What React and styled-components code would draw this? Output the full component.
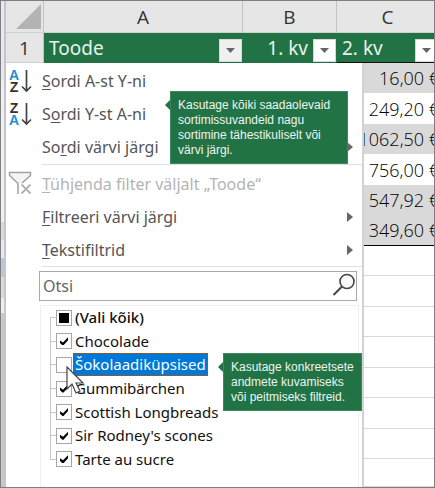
import React from 'react';
import styled, { createGlobalStyle } from 'styled-components';

const GlobalStyle = createGlobalStyle`
  * {
    box-sizing: border-box;
  }
  body {
    margin: 0;
    font-family: 'Noto Sans', 'Open Sans', sans-serif;
  }
`;

const Window = styled.div`
  display: flex;
  height: 100vh;
  min-height: 480px;
  border: 1px solid #7f7f7f;
  overflow: hidden;
  background: #fff;
`;

const Edge = styled.div`
  flex: 0 0 5px;
  border-right: 2px solid #c4c4cc;
  background: linear-gradient(
    #e8e8f4 0 79px,
    #efeff5 79px 221px,
    #dedad8 221px 239px,
    #e4eaf8 239px 257px,
    #bcc6da 257px 276px,
    #dedad8 276px 297px,
    #f0eeee 297px 312px,
    #cbc8c8 312px
  );
`;

const Sheet = styled.main`
  position: relative;
  flex: 1;
  min-width: 0;
  overflow: hidden;
`;

const Grid = styled.table`
  width: calc(100% + 5px);
  height: 100%;
  table-layout: fixed;
  border-collapse: separate;
  border-spacing: 0;

  th,
  td {
    padding: 0;
    font-weight: 400;
    white-space: nowrap;
  }
`;

const Col = styled.col`
  width: ${({ $width }) => $width || 'auto'};
`;

const ColumnHead = styled.th`
  height: 32px;
  border-right: 1px solid #c3c3c3;
  border-bottom: 1px solid #d0d0d0;
  background: #e6e6e6;
  color: #333;
  font-family: 'Open Sans', sans-serif;
  font-size: 19px;
  line-height: 24px;

  svg {
    display: block;
    margin-left: auto;
  }
`;

const RowHead = styled(ColumnHead)`
  height: 30px;
`;

const FieldHead = styled.th`
  height: 30px;
  border-bottom: 1px solid ${({ $ruled }) => ($ruled ? '#111' : '#217346')};
  background: #217346;
  color: #e9f3ec;
`;

const Field = styled.div`
  display: flex;
  align-items: center;
  justify-content: ${({ $end }) => ($end ? 'flex-end' : 'space-between')};
  gap: 5px;
  height: 29px;
  padding: 0 1px 0 5px;
  font-size: 19px;
  line-height: 24px;
`;

const FilterButton = styled.button`
  display: flex;
  align-items: center;
  justify-content: center;
  align-self: flex-end;
  width: 23px;
  height: 23px;
  padding: 0;
  border: 1px solid #d8d8d8;
  background: ${({ $open }) => ($open ? '#f0f0f0' : '#fff')};
`;

const Row = styled.tr`
  height: 31px;
  background: ${({ $shaded }) => ($shaded ? '#d9d9d9' : '#fff')};

  &:nth-child(odd) {
    height: 30px;
  }
  &:last-child {
    height: auto;
  }
`;

const Cell = styled.td`
  border-bottom: ${({ $rule }) => $rule};
`;

const Amount = styled(Cell)`
  color: #000;
  font-family: 'Open Sans', sans-serif;
  font-size: 18px;
  line-height: 24px;
  text-align: right;

  && {
    font-weight: 300;
  }
`;

const Menu = styled.section`
  position: absolute;
  top: 62px;
  right: 70px;
  bottom: 0;
  left: 0;
  display: flex;
  flex-direction: column;
  border-right: 2px solid #d2d2d2;
  background: #fff;
`;

const MenuItem = styled.button`
  display: grid;
  grid-template-columns: 36px 1fr 10px;
  align-items: center;
  width: 100%;
  height: 33px;
  padding: 0 5px 0 0;
  border: 0;
  background: none;
  color: ${({ disabled }) => (disabled ? '#b4b4b4' : '#555')};
  font: 16px/20px 'Noto Sans', 'Open Sans', sans-serif;
  text-align: left;
  white-space: nowrap;

  svg {
    display: block;
  }
  u {
    text-underline-offset: 2px;
  }
`;

const ItemIcon = styled.span`
  padding-left: 2px;
`;

const Group = styled.div`
  flex: none;
  padding: ${({ $first }) => ($first ? '1px 0' : '2px 0 0')};
`;

const Separator = styled.hr`
  flex: none;
  width: auto;
  height: 1px;
  margin: 0 0 0 36px;
  border: 0;
  background: #dfe0e4;
`;

const SearchBox = styled.label`
  display: flex;
  flex: none;
  align-items: center;
  height: 30px;
  margin: 4px 5px 4px 33px;
  border: 1px solid #a8a8a8;

  input {
    flex: 1;
    min-width: 0;
    padding: 0 3px;
    border: 0;
    outline: 0;
    background: none;
    font: 16px/20px 'Noto Sans', 'Open Sans', sans-serif;
  }
  input::placeholder {
    color: #666;
    opacity: 1;
  }
`;

const Tree = styled.ul`
  display: flex;
  flex: 1;
  flex-direction: column;
  margin: 0 3px 0 34px;
  padding: 0 0 16px 9px;
  border: 1px solid #efefef;
  border-bottom: 0;
  list-style: none;
`;

const Branch = styled.li`
  display: flex;
  flex: 1;
  align-items: center;
  background:
    linear-gradient(#c8c8c8, #c8c8c8) 0 50% / 7px 1px no-repeat,
    linear-gradient(#c8c8c8, #c8c8c8) 0 ${({ $edge }) => ($edge === 'first' ? '100%' : '0')} /
      1px ${({ $edge }) => ($edge ? '50%' : '100%')} no-repeat;

  label {
    display: flex;
    align-items: center;
    padding-left: 6px;
    white-space: nowrap;
  }
`;

const Tick = styled.input`
  display: flex;
  align-items: center;
  justify-content: center;
  flex: none;
  width: 16px;
  height: 16px;
  margin: 0;
  appearance: none;
  border: 1px solid #a6a6a6;
  background: #fff;

  &:checked::after {
    content: '';
    width: ${({ $partial }) => ($partial ? '10px' : '8px')};
    height: ${({ $partial }) => ($partial ? '10px' : '8px')};
    background: #000;
    clip-path: ${({ $partial }) =>
      $partial ? 'none' : 'polygon(0 38%, 38% 64%, 100% 0, 100% 36%, 44% 100%, 30% 100%, 0 72%)'};
  }
`;

const TickLabel = styled.span`
  margin-left: 1px;
  padding: 0 1px;
  border: 1px solid ${({ $selected }) => ($selected ? '#8a5a2a' : 'transparent')};
  background: ${({ $selected }) => ($selected ? '#0078d7' : 'none')};
  color: ${({ $selected }) => ($selected ? '#fff' : '#111')};
  font-size: 15px;
  font-weight: ${({ $strong }) => ($strong ? 500 : 400)};
  line-height: 21px;
`;

const Callout = styled.aside`
  position: absolute;
  top: ${({ $top }) => $top};
  left: ${({ $left }) => $left};
  width: ${({ $width }) => $width};
  padding: 6px 0 5px 7px;
  border: 1px solid #3d8860;
  background: #217346;
  color: #eef5f0;
  font: 12px/15px 'Liberation Sans', Arial, sans-serif;
  white-space: pre;

  &::before {
    content: '';
    position: absolute;
    top: 8px;
    left: -6px;
    border: 5px solid transparent;
    border-right-color: #217346;
    border-left: 0;
  }
`;

const Pointer = styled.svg`
  position: absolute;
  top: 303px;
  left: 60px;
`;

const Triangle = ({ down }) =>
  down ? (
    <svg width="9" height="5" viewBox="0 0 9 5" aria-hidden="true">
      <path d="M0 0h9L4.500 5z" fill="#666" />
    </svg>
  ) : (
    <svg width="6" height="10" viewBox="0 0 6 10" aria-hidden="true">
      <path d="M0 0l6 5-6 5z" fill="#666" />
    </svg>
  );

const SortIcon = ({ top, bottom }) => (
  <svg width="26" height="26" viewBox="0 0 26 26" aria-hidden="true">
    <g fontFamily="Liberation Sans, sans-serif" fontSize="14" fontWeight="700" textAnchor="middle">
      <text x="6" y="12" fill={top === 'A' ? '#1e8fd5' : '#333'}>{top}</text>
      <text x="6" y="24" fill={bottom === 'A' ? '#1e8fd5' : '#333'}>{bottom}</text>
    </g>
    <path d="M18.500 2v21M14 18.500l4.500 4.500 4.500-4.500" fill="none" stroke="#444" strokeWidth="1.700" />
  </svg>
);

const ClearIcon = () => (
  <svg width="25" height="25" viewBox="0 0 25 25" aria-hidden="true">
    <path d="M2 2h20v2.500L14 12l-4 1-8-8.500z" fill="#eee" opacity=".6" />
    <path d="M14 12l8.500-7.500v-3h-21v3L10 12.500V23" fill="none" stroke="#a0a0a0" strokeWidth="1.500" />
    <path d="M13.500 13.500l9 9M22.500 13.500l-9 9" stroke="#b0b0b0" strokeWidth="1.800" />
  </svg>
);

const SearchIcon = () => (
  <svg width="24" height="26" viewBox="0 0 24 26" aria-hidden="true">
    <circle cx="15" cy="8.500" r="7" fill="#fafafa" stroke="#444" strokeWidth="1.600" />
    <path d="M10 13.500L1.500 22" stroke="#444" strokeWidth="2" />
  </svg>
);

const amounts = [
  ['16,00 €', true],
  ['249,20 €', false],
  ['1062,50 €', true],
  ['756,00 €', false],
  ['547,92 €', true],
  ['349,60 €', true],
];

const blankRows = [1, 2, 3, 4, 5, 6, 7, 8];

const products = [
  { name: '(Vali kõik)', checked: true, partial: true },
  { name: 'Chocolade', checked: true },
  { name: 'Šokolaadiküpsised', checked: false, selected: true },
  { name: 'Gummibärchen', checked: true },
  { name: 'Scottish Longbreads', checked: true },
  { name: "Sir Rodney's scones", checked: true },
  { name: 'Tarte au sucre', checked: true },
];

const edgeOf = (index) => {
  if (index === 0) return 'first';
  return index === products.length - 1 ? 'last' : undefined;
};

const Worksheet = () => (
  <Grid>
    <colgroup>
      <Col $width="38px" />
      <Col />
      <Col $width="94px" />
      <Col $width="102px" />
    </colgroup>
    <thead>
      <tr>
        <ColumnHead>
          <svg width="28" height="26" viewBox="0 0 28 26" aria-hidden="true">
            <path d="M26 0v25H1z" fill="#b3b3b3" />
          </svg>
        </ColumnHead>
        <ColumnHead>A</ColumnHead>
        <ColumnHead>B</ColumnHead>
        <ColumnHead>C</ColumnHead>
      </tr>
      <tr>
        <RowHead>1</RowHead>
        <FieldHead>
          <Field>
            Toode
            <FilterButton $open aria-label="Toode"><Triangle down /></FilterButton>
          </Field>
        </FieldHead>
        <FieldHead>
          <Field $end>
            1. kv
            <FilterButton aria-label="1. kv"><Triangle down /></FilterButton>
          </Field>
        </FieldHead>
        <FieldHead $ruled>
          <Field>
            2. kv
            <FilterButton aria-label="2. kv"><Triangle down /></FilterButton>
          </Field>
        </FieldHead>
      </tr>
    </thead>
    <tbody>
      {amounts.map(([value, shaded], index) => (
        <Row key={value} $shaded={shaded}>
          <Cell colSpan={3} />
          <Amount $rule={index === amounts.length - 1 ? '1px solid #000' : '0'}>{value}</Amount>
        </Row>
      ))}
      {blankRows.map((row) => (
        <Row key={row}>
          <Cell colSpan={4} $rule="1px solid #d9d9d9" />
        </Row>
      ))}
    </tbody>
  </Grid>
);

const FilterMenu = () => (
  <Menu>
    <Group $first>
      <MenuItem>
        <ItemIcon><SortIcon top="A" bottom="Z" /></ItemIcon>
        <span><u>S</u>ordi A-st Y-ni</span>
      </MenuItem>
      <MenuItem>
        <ItemIcon><SortIcon top="Z" bottom="A" /></ItemIcon>
        <span>S<u>o</u>rdi Y-st A-ni</span>
      </MenuItem>
      <MenuItem>
        <ItemIcon />
        <span>So<u>r</u>di värvi järgi</span>
        <Triangle />
      </MenuItem>
    </Group>
    <Separator />
    <Group>
      <MenuItem disabled>
        <ItemIcon><ClearIcon /></ItemIcon>
        <span><u>T</u>ühjenda filter väljalt „Toode“</span>
      </MenuItem>
      <MenuItem>
        <ItemIcon />
        <span><u>F</u>iltreeri värvi järgi</span>
        <Triangle />
      </MenuItem>
      <MenuItem>
        <ItemIcon />
        <span><u>T</u>ekstifiltrid</span>
        <Triangle />
      </MenuItem>
    </Group>
    <Separator />
    <SearchBox>
      <input type="text" placeholder="Otsi" aria-label="Otsi" />
      <SearchIcon />
    </SearchBox>
    <Tree>
      {products.map(({ name, checked, partial, selected }, index) => (
        <Branch key={name} $edge={edgeOf(index)}>
          <label>
            <Tick type="checkbox" defaultChecked={checked} $partial={partial} />
            <TickLabel $selected={selected} $strong={partial}>{name}</TickLabel>
          </label>
        </Branch>
      ))}
    </Tree>
    <Pointer width="20" height="30" viewBox="0 0 20 30" aria-hidden="true">
      <path d="M1 1v22l5-5 4 9 4-2-4-8h7z" fill="#fff" stroke="#444" strokeWidth="1.200" />
    </Pointer>
    <Callout $top="28px" $left="164px" $width="178px">
      {'Kasutage kõiki saadaolevaid\nsortimissuvandeid nagu\nsortimine tähestikuliselt või\nvärvi järgi.'}
    </Callout>
    <Callout $top="290px" $left="217px" $width="139px">
      {'Kasutage konkreetsete\nandmete kuvamiseks\nvõi peitmiseks filtreid.'}
    </Callout>
  </Menu>
);

const App = () => (
  <>
    <GlobalStyle />
    <Window>
      <Edge />
      <Sheet>
        <Worksheet />
        <FilterMenu />
      </Sheet>
    </Window>
  </>
);

export default App;
